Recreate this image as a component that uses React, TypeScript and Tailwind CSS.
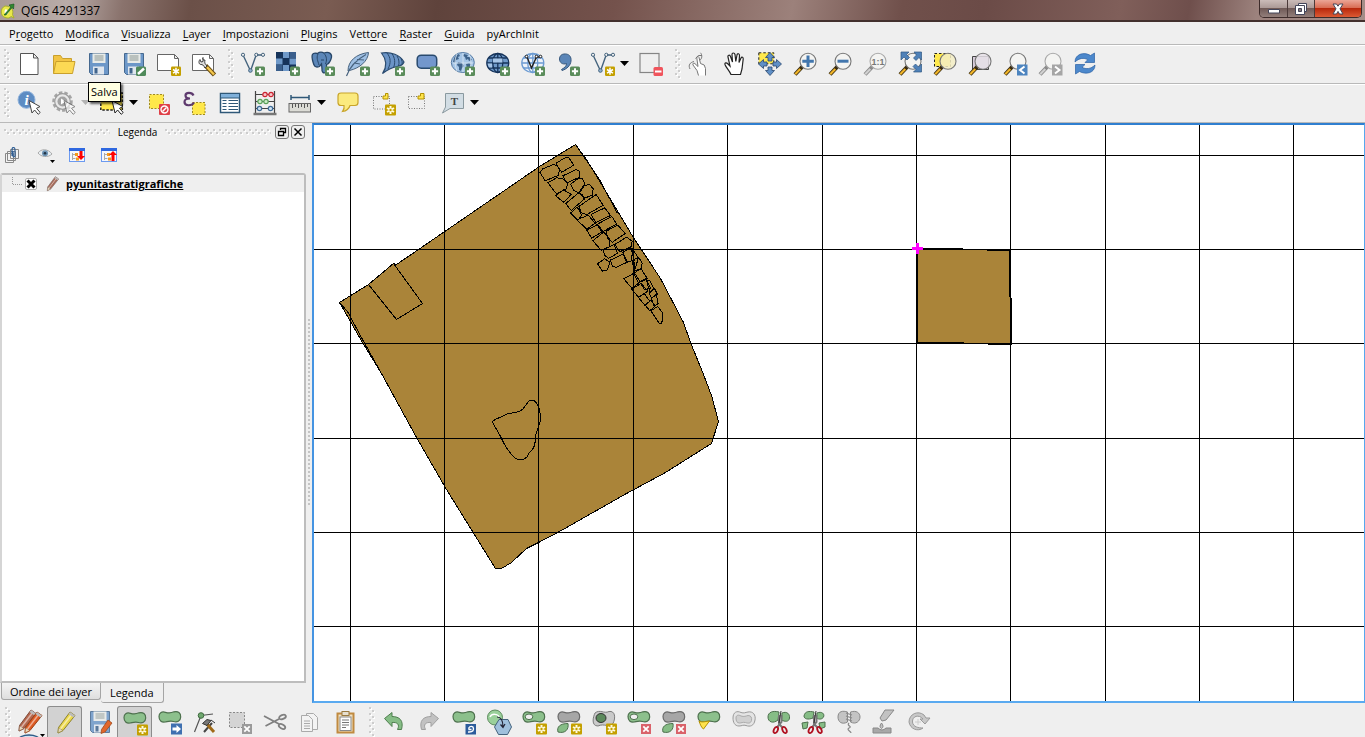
import React from "react";

type Draw = React.ReactNode;

/* ---------- small marks shared by many tool icons ---------- */

const Plus = () => (
  <g>
    <rect x="14" y="14.5" width="10" height="9.5" rx="1.5" fill="#5a8c5a" />
    <path d="M19 16.2v6.2M15.9 19.3h6.2" stroke="#fff" strokeWidth="2" />
  </g>
);
const Star = () => (
  <g transform="translate(14 14.5)">
    <rect width="10" height="9.5" rx="1.2" fill="#c4a000" />
    <path d="M5 1.3v7M2 3l6 3.6M8 3L2 6.6" stroke="#fff" strokeWidth="1.5" />
  </g>
);
const Gear = () => (
  <g>
    <rect x="14" y="13.5" width="11" height="11" rx="1" fill="#c4a000" />
    <path d="M19.5 15v8M16 17l7 4M23 17l-7 4" stroke="#fffbe0" strokeWidth="2" />
    <circle cx="19.5" cy="19" r="1.2" fill="#c4a000" />
  </g>
);
const Cross = ({ grey = false }: { grey?: boolean }) => (
  <g>
    <rect x="14" y="14" width="10" height="10" fill={grey ? "#9a9a9a" : "#d9626a"} />
    <path d="M16.3 16.3l5.4 5.4M21.7 16.3l-5.4 5.4" stroke="#fff" strokeWidth="1.8" />
  </g>
);
const Pointer = ({ dark = false }: { dark?: boolean }) => (
  <path
    d="M12 9.5l3 12.5 2.6-3 3.6 4.3 2-1.8-3.7-4.2 3.5-1.7z"
    fill="#fff"
    stroke={dark ? "#222" : "#444"}
    strokeWidth="1"
  />
);
const Lens = ({ children, grey = false, fill = "#f4f4f2" }: { children?: Draw; grey?: boolean; fill?: string }) => (
  <g>
    <path d="M9.5 14.5L2 22.5" stroke={grey ? "#8a8a8a" : "#3a2c10"} strokeWidth="4" />
    <path d="M7.3 17L2.2 22.3" stroke={grey ? "#d0d0d0" : "#f0b428"} strokeWidth="2.2" />
    <circle cx="15" cy="9.2" r="8" fill={fill} fillOpacity="0.85" stroke={grey ? "#a8a8a8" : "#777"} strokeWidth="1.1" />
    {children}
  </g>
);
const Floppy = () => (
  <g>
    <path d="M2.5 1.5h19v21h-17l-2-2z" fill="#6c97c8" stroke="#45688f" />
    <rect x="5.5" y="1.5" width="13" height="9.5" fill="#e8ebe8" />
    <path d="M7.5 4h9M7.5 6h9M7.5 8h9" stroke="#8b9793" />
    <rect x="6" y="14.5" width="11" height="8" fill="#dfe6ee" />
    <rect x="7.5" y="16" width="3" height="5.5" fill="#41658d" />
  </g>
);
const Nodes = () => (
  <g fill="none" stroke="#44637d">
    <path d="M2.6 4.2L8.6 17M10.2 17L14.8 4M16 3h4.5" strokeWidth="1.4" />
    <circle cx="2" cy="2.8" r="1.6" />
    <circle cx="15.3" cy="2.8" r="1.6" />
    <circle cx="22" cy="2.8" r="1.6" />
    <circle cx="9.4" cy="18.5" r="1.8" fill="#8fb0cf" />
  </g>
);
const Blob = ({ fill = "#8cc08c", stroke = "#4d704d", children }: { fill?: string; stroke?: string; children?: Draw }) => (
  <g>
    <path
      d="M1 6.500C1 3 3.500 1.200 7.500 2.300C11 3.300 13 3.100 16 1.800C20 .800 23 3 22.700 7C22.500 11.500 19 12.500 15.500 11.500C12 10.600 10 11.500 7 12C3.500 12.500 1 10.500 1 6.500z"
      fill={fill}
      stroke={stroke}
      strokeWidth="1.2"
    />
    {children}
  </g>
);
const GREY = "#a6a6a6";
const Ring = () => <ellipse cx="7" cy="6.800" rx="3.800" ry="2.800" fill="#efefef" stroke="#4d704d" />;
const Leaf = () => <path d="M1 22C-.500 17 3 13.500 11 13.500C12 19 8.500 24 1 22z" fill="#86bd86" stroke="#4d704d" />;
const Scissors = () => (
  <g fill="none">
    <path d="M12 5v9l4 4M14.500 5v7l-5 6" stroke="#777" strokeWidth="2" />
    <path d="M14 1L12 13" stroke="#333" />
    <ellipse cx="8.800" cy="20" rx="1.900" ry="3.300" transform="rotate(25 8.800 20)" stroke="#b01020" strokeWidth="1.800" />
    <ellipse cx="17.500" cy="20" rx="1.900" ry="3.300" transform="rotate(-25 17.500 20)" stroke="#b01020" strokeWidth="1.800" />
  </g>
);
const Pencil = ({ fill, edge }: { fill: string; edge: string }) => (
  <g>
    <path d="M17 1l5 3.500L10 19.500 5 22l.5-5.500z" fill={fill} stroke={edge} />
    <path d="M5.500 16.500L10 19.500 5 22z" fill="#e6d8bd" stroke={edge} strokeWidth=".6" />
    <path d="M19 3L7.500 18" stroke="#fff" strokeOpacity=".5" strokeWidth="1.500" />
    <path d="M17 1l5 3.500-1.500 2L15.500 3z" fill="#bbb" />
  </g>
);
const Globe = ({ fill, stroke }: { fill: string; stroke: string }) => (
  <g fill="none" stroke={stroke} strokeWidth="1.300">
    <ellipse cx="11.800" cy="11" rx="11" ry="9.500" fill={fill} />
    <ellipse cx="11.800" cy="11" rx="5" ry="9.500" />
    <path d="M11.800 1.500v19M1 11h22M3 6h17.600M3 16h17.600" />
  </g>
);

/* ---------- icon table ---------- */

const icons: Record<string, Draw> = {
  new: <path d="M3.500 1.500h13l4.500 4.500v16.500h-17.500zM16.500 1.500V6H21" fill="#fff" stroke="#555" />,
  open: (
    <g stroke="#c9a02c">
      <path d="M1.500 21.500V3.500h7l2 3h9v3" fill="#f2c444" />
      <path d="M1.500 21.500l2.500-12h19l-2.500 12z" fill="#fcd954" />
    </g>
  ),
  save: <Floppy />,
  saveAs: (
    <g>
      <Floppy />
      <rect x="14" y="14.500" width="10" height="9.500" rx="1.500" fill="#4f8a5a" />
      <path d="M16 22l6-5.500" stroke="#fff" strokeWidth="2.500" />
    </g>
  ),
  composer: (
    <g>
      <path d="M.5 2.500h17l4 4v12h-21zM17.500 2.500v4h4" fill="#fff" stroke="#666" />
      <Star />
    </g>
  ),
  manager: (
    <g>
      <path d="M.5 2.500h17l4 4v12h-21zM17.500 2.500v4h4" fill="#fff" stroke="#666" />
      <path d="M13.500 13.500l9 9.500" stroke="#6b4d10" strokeWidth="4.500" />
      <path d="M15 15l7 7.500" stroke="#f3c64c" strokeWidth="2.500" />
      <path d="M11 5.500c-1 1.800.5 3 2 2.500-.5 2.800-.5 3.500 2 6l-2 2c-1.500-3-2.500-3.500-4-3.500C6.500 12.500 6.500 9 8 7.500l1 2.500 2-.5z" fill="#ddd" stroke="#333" strokeWidth=".9" />
    </g>
  ),
  vector: (<g><Nodes /><Plus /></g>),
  raster: (
    <g>
      <rect y="0" width="20" height="19" fill="#16335a" />
      <path d="M7 0h6v6H7zM0 6.500h6.500v6H0zM13.500 6.500H20v6h-6.500zM7 13h6v6H7z" fill="#6f99c9" />
      <path d="M13.500 0H20v6h-6.500zM0 13h6.500v6H0z" fill="#3a5f8c" />
      <Plus />
    </g>
  ),
  postgis: (
    <g>
      <path d="M2 10C0 3 1 0 6.500 1.500 9-.5 12 .5 13 1c5-2 9 1 7 6-1 3-3 5-4.500 5.500V20c-3 2-5 0-4.500-3l-.5-5-2 2.500C4 16 3 14 2 10z" fill="#5b86b8" stroke="#274668" strokeWidth="1.300" />
      <path d="M7 2c-2 4 0 7 1 11M13 1.500c3 3 3 7 1.500 10.500M10 8h3" fill="none" stroke="#274668" />
      <Plus />
    </g>
  ),
  feather: (
    <g>
      <path d="M2 19C2 9 10 2 22.500.5 22 9 14 16 3.500 18.500z" fill="#9fc0e4" stroke="#46617d" />
      <path d="M.5 24C4 14 10 8 20 2.500M8 11l6 1M11 7.500l7 .5" fill="none" stroke="#46617d" strokeWidth="1.200" />
      <Plus />
    </g>
  ),
  fan: (
    <g>
      <path d="M.5 1C10-.5 19 3 23 10c-1 3-4 4-7 4.500C11 15.500 6 18 1.500 21.500 6 15 6 8 .5 1z" fill="#6b94c6" stroke="#294a6e" strokeWidth="1.200" />
      <path d="M6 1c4 5 4 10 1 16M11 1.800c3 4 3.500 9 1.500 14M16 4c2 3 2.500 7 1.500 10M20 6.500c1 2 1.500 4 1 6" fill="none" stroke="#294a6e" />
      <Plus />
    </g>
  ),
  rect: (
    <g>
      <rect x="1.200" y="3.200" width="19.500" height="13" rx="4" fill="#7397cc" stroke="#294a6e" strokeWidth="1.500" />
      <Plus />
    </g>
  ),
  wms: (
    <g>
      <ellipse cx="11.800" cy="10.500" rx="11.500" ry="10" fill="#a5c5e6" stroke="#557ba4" />
      <path d="M3 6l2-3 3-1 1 2-2 1 1 2-3 1-1 3-2-1zM13 2l4 1-1 2 3 0 2 3-3 1-1-2-2 1-1-3-2-1zM7 10l4 1 2 3-2 2-1 3-2-1 0-3-2-2zM15 12l3-1 2 1-1 3-3 1z" fill="#3f648c" />
      <path d="M2 11h20M12 1v19M6 2q-4 8 0 17M18 2q4 8 0 17" fill="none" stroke="#dce8f4" strokeWidth=".8" />
      <Plus />
    </g>
  ),
  wcs: (<g><Globe fill="#6f99c9" stroke="#16335a" /><path d="M7 6.500h9.500v4H7zM1.500 11.500H6v4H3z" fill="#a7c6e8" /><Plus /></g>),
  wfs: (
    <g>
      <Globe fill="#edf3fa" stroke="#6c9bd2" />
      <path d="M6 5l4.500 11L15.500 5h4" fill="none" stroke="#222" strokeWidth="1.400" />
      <g fill="#fff" stroke="#222"><circle cx="5.500" cy="4.500" r="1.300" /><circle cx="15.500" cy="4.500" r="1.300" /><circle cx="19.500" cy="4.500" r="1.300" /></g>
      <Plus />
    </g>
  ),
  comma: (
    <g>
      <path d="M8 2c5-.5 7.500 2.500 7 7-.5 4.500-4 8-9 9.500l-.5-1C9 15.500 10.500 14 10.500 11.500 6.500 13 3.500 10.500 3.500 7c0-3 2-4.800 4.500-5z" fill="#5b86b8" stroke="#38597e" />
      <Plus />
    </g>
  ),
  newVector: (<g><Nodes /><Star /></g>),
  remove: (
    <g>
      <rect x="1" y="1.500" width="19" height="19" fill="#efefef" stroke="#858585" strokeWidth="1.200" />
      <rect x="14.500" y="15" width="9.500" height="9" rx="1.500" fill="#f0545c" />
      <path d="M16 19.500h6.500" stroke="#fff" strokeWidth="2" />
    </g>
  ),
  touch: (
    <g fill="#fff" stroke="#777" strokeWidth="1">
      <path d="M10.500 23.500l-1.500-5-4-5.500c-.8-1.800 1-2.300 2-1.300l3 2.800L8.800 6c0-2 1.700-2 2.200-.5l1.500 6 3.700 1.500 1.300 3.500v7" />
      <path d="M12 8C14 7 14.500 3 12.500.8M7.500 6.500q2.500-4.500 6.500-3M2 17C0 13 2 10.500 6 9.500" fill="none" />
    </g>
  ),
  hand: <path d="M8 22.500C6 18 3 15.500 2 12.500c-.5-2 1.500-2 3-.5l2 2L5 5c-.5-2 1.800-2.500 2.500-.5L9.500 10 9 2.500C9 .5 11.500.5 12 2.500l.8 7L14 3c.3-2 2.500-1.500 2.500.5L16 10.500l2-4.500c.8-1.500 2.500-.8 2.200 1L19 17l-1.500 5.500z" fill="#fff" stroke="#222" strokeWidth="1.200" />,
  pan: (
    <g>
      <path d="M.8.800h15v11h-15z" fill="#ffe94c" stroke="#222" strokeDasharray="2.500 2" />
      <path d="M12 .5l4.500 5h-2.500v3.500h-4V5.500H7.500zM12 23.500l-4.500-5H10V15h4v3.500h2.500zM.5 12l5-4.500V10H9v4H5.500v2.500zM23.500 12l-5 4.500V14H15v-4h3.500V7.500z" fill="#5f8fc6" stroke="#29486e" strokeWidth=".8" />
    </g>
  ),
  zoomIn: <Lens><path d="M15 3.500v11.500M9.300 9.200h11.500" stroke="#4276ad" strokeWidth="3" /></Lens>,
  zoomOut: <Lens><path d="M9.500 9.200h11" stroke="#4276ad" strokeWidth="3" /></Lens>,
  zoomOne: (
    <Lens grey>
      <text x="15" y="12.500" fontSize="9" fontWeight="700" textAnchor="middle" fontFamily="Liberation Sans, sans-serif" fill="#777">1:1</text>
    </Lens>
  ),
  zoomFull: (
    <g>
      <Lens />
      <path d="M3 0h8L8.500 2.500l3 3-2.500 2.500-3-3L3 8zM23.500 0v8L21 5.500l-3 3L15.500 6l3-3L16 0zM23.500 20h-8l2.500-2.500-3-3 2.500-2.500 3 3L23.500 12z" fill="#4f81b8" stroke="#2f5783" strokeWidth=".7" />
    </g>
  ),
  zoomSel: (<g><path d="M1.500 1.500h16v13h-16z" fill="#ffe94c" stroke="#222" strokeDasharray="2.500 2" /><Lens fill="#f3edc4" /></g>),
  zoomLayer: (<g><path d="M4.500 4.500h16v13h-16z" fill="#d8cddb" stroke="#444" /><Lens fill="#e6e0e8" /></g>),
  zoomLast: (<g><Lens /><rect x="14" y="12.500" width="10.500" height="11" fill="#4c84bf" /><path d="M21.500 14.500l-4.500 3.500 4.500 3.500" fill="none" stroke="#fff" strokeWidth="2" /></g>),
  zoomNext: (<g><Lens grey /><rect x="14" y="12.500" width="10.500" height="11" fill="#a5a5a5" /><path d="M17 14.500l4.500 3.500-4.500 3.500" fill="none" stroke="#fff" strokeWidth="2" /></g>),
  refresh: (
    <g fill="#4c88cc" stroke="#2c62a4" strokeWidth=".7">
      <path d="M2 10C2 2 11-.5 17.500 3.500L21.500 1v9.500H12l2.800-2.800C11 5.500 6 6 2 10z" />
      <path d="M22 13c0 8-9 10-15.500 6.500L2.500 22v-9.500h9.500l-3 2.800c4 2.200 9 1.700 13-2.300z" />
    </g>
  ),
  identify: (
    <g>
      <circle cx="9.500" cy="8.800" r="8.500" fill="#5d8cc3" stroke="#8fb2db" />
      <text x="9.500" y="14" fontSize="15" fontStyle="italic" fontWeight="700" textAnchor="middle" fontFamily="Liberation Serif, serif" fill="#fff">i</text>
      <Pointer />
    </g>
  ),
  action: (
    <g>
      <circle cx="10.500" cy="10.500" r="9" fill="#efefef" stroke="#a5a5a5" strokeWidth="2.500" strokeDasharray="3.500 2" />
      <circle cx="10.500" cy="10.500" r="7.800" fill="#e8e8e8" stroke="#9c9c9c" strokeWidth="1.200" />
      <circle cx="10.500" cy="10.500" r="5" fill="#a2a2a2" />
      <path d="M9 7.500v6l5-3z" fill="#fff" />
      <g opacity=".6"><Pointer /></g>
    </g>
  ),
  select: (
    <g>
      <path d="M.8 2h21.500v17H.8z" fill="#ffe94c" stroke="#222" strokeWidth="1.500" strokeDasharray="2.500 1.500" />
      <Pointer dark />
    </g>
  ),
  deselect: (
    <g>
      <path d="M1.500 3.500h14v14h-14z" fill="#ffe84a" stroke="#a08a20" strokeDasharray="2 1.500" />
      <rect x="11" y="13" width="11" height="11" rx="1" fill="#df4048" />
      <circle cx="16.500" cy="18.500" r="3.500" fill="none" stroke="#fff" strokeWidth="1.400" />
      <path d="M14.500 20.500l4-4" stroke="#fff" strokeWidth="1.400" />
    </g>
  ),
  expression: (
    <g>
      <path d="M9.500 11.500h12.500v12H9.500z" fill="#ffe84a" stroke="#a08a20" strokeDasharray="2 1.500" />
      <path d="M10.500 4.500C9 1 2.500 1 2.500 4.500c0 2 2 3 4.500 3C3.500 7.500 1.500 9 1.500 11c0 4 7 4.500 9.500.5" fill="none" stroke="#5e3a6e" strokeWidth="2.200" />
    </g>
  ),
  table: (
    <g>
      <rect x="2.500" y="2.500" width="19" height="19" fill="#fff" stroke="#2f5878" strokeWidth="1.500" />
      <rect x="3" y="3" width="18" height="4" fill="#7fb0da" />
      <path d="M4.500 9.500h4M4.500 12.500h4M4.500 15.500h4M4.500 18.500h4M10.500 9.500h9.500M10.500 12.500h9.500M10.500 15.500h9.500M10.500 18.500h9.500M3 7h18" stroke="#2f5878" />
    </g>
  ),
  abacus: (
    <g fill="none" stroke="#444" strokeWidth="1.200">
      <path d="M2.500 0v22M21.500 0v22M2.500 3.500h19M2.500 10.500h19M2.500 17.500h19" />
      <path d="M.5 23h23" strokeWidth="2.500" stroke="#777" />
      <g fill="#f6c6c8" stroke="#cc2230"><circle cx="12" cy="3.500" r="2.200" /><circle cx="18" cy="3.500" r="2.200" /></g>
      <g fill="#cdeccb" stroke="#58a058"><circle cx="7" cy="10.500" r="2.200" /><circle cx="13" cy="10.500" r="2.200" /></g>
      <g fill="#cfe2f2" stroke="#3f6c98"><circle cx="6.500" cy="17.500" r="2.200" /><circle cx="17.500" cy="17.500" r="2.200" /></g>
    </g>
  ),
  measure: (
    <g>
      <path d="M3 6.500h18M3 4v5M21 4v5" stroke="#2f5878" strokeWidth="1.500" />
      <rect x="1" y="12.500" width="21.500" height="8.500" fill="#dcdcd6" stroke="#666" />
      <path d="M4.500 13v4M7.500 13v3M10.500 13v4M13.500 13v3M16.500 13v4M19.500 13v3" stroke="#555" />
    </g>
  ),
  tips: <path d="M5 2h14q3 0 3 3v6.500q0 3-3 3h-5c-1 3.500-4 5.500-7.500 6 1.500-2 2-4 1.500-6H5q-3 0-3-3V5q0-3 3-3z" fill="#fbea7e" stroke="#c8a42a" strokeWidth="1.200" />,
  newMark: (
    <g>
      <path d="M2.500 5.500h16v12.500h-16z" fill="none" stroke="#777" strokeDasharray="1 1.500" />
      <path d="M12 8V5h2.500V2.500H17V8z" fill="#ffe54c" stroke="#b49200" />
      <Gear />
    </g>
  ),
  marks: (
    <g>
      <path d="M2.500 5.500h16v12h-16z" fill="none" stroke="#777" strokeDasharray="1 1.500" />
      <path d="M12 8V5h2.500V2.500H18V8z" fill="#ffe54c" stroke="#b49200" />
    </g>
  ),
  note: (
    <g>
      <path d="M4.500 2.500h18v15H9L1.500 22l3-6z" fill="#d2dde4" stroke="#8a999f" />
      <text x="13.500" y="14" fontSize="11" fontWeight="700" textAnchor="middle" fontFamily="Liberation Serif, serif" fill="#444">T</text>
    </g>
  ),
  edits: (
    <g>
      <ellipse cx="11" cy="30.500" rx="11" ry="5.500" fill="#cfe2f2" stroke="#2c5a86" strokeWidth="1.300" />
      <g transform="translate(-4 -1)"><Pencil fill="#b5674e" edge="#7d4a38" /></g>
      <g transform="translate(2 1)"><Pencil fill="#dd5a22" edge="#9a4014" /></g>
      <path d="M22 24h5l-2.500 3z" />
    </g>
  ),
  pencil: <Pencil fill="#ecd94c" edge="#8c8030" />,
  saveEdits: (
    <g>
      <g opacity=".85"><Floppy /></g>
      <path d="M20 10l4 3-7 9-4 1.500.5-4z" fill="#e2672c" stroke="#a04a1c" strokeWidth=".8" />
    </g>
  ),
  addFeature: (<g><Blob /><Gear /></g>),
  moveFeature: (
    <g>
      <Blob />
      <rect x="13" y="13.500" width="11" height="11" fill="#3f70b0" />
      <path d="M14.500 17.500h4V15l4.500 4-4.500 4v-2.500h-4z" fill="#fff" />
    </g>
  ),
  nodeTool: (
    <g>
      <path d="M1.500 22L8 5.500 20 4" fill="none" stroke="#555" strokeWidth="1.200" />
      <circle cx="8" cy="5.500" r="2.800" fill="#6fa86f" stroke="#3e6a3e" />
      <path d="M11 22l8-9" stroke="#444" strokeWidth="2" />
      <path d="M13 13l8 9" stroke="#a06a18" strokeWidth="3" />
      <path d="M9.500 13.500L14 9.500l4 1-4 5zM18 10l4 3" fill="#777" stroke="#333" />
    </g>
  ),
  deleteSel: (<g><rect x="1.500" y="2.500" width="15" height="15" fill="#d4d4d4" stroke="#888" strokeDasharray="2 1.500" /><Cross grey /></g>),
  cut: (
    <g fill="none" stroke="#808080" strokeWidth="1.800">
      <path d="M1 6l15 8M2.500 16L16 9" />
      <ellipse cx="19.500" cy="7" rx="3.500" ry="2" transform="rotate(-20 19.500 7)" />
      <ellipse cx="19" cy="16.500" rx="3.500" ry="2" transform="rotate(30 19 16.500)" />
    </g>
  ),
  copy: (
    <g fill="#f3f3f3" stroke="#aaa">
      <path d="M8.500 3.500h7l4 4v12h-11z" />
      <path d="M3.500 5.500h7l4 4v12h-11zM6 11h6M6 13.500h6M6 16h6M6 18.500h6" />
    </g>
  ),
  paste: (
    <g>
      <rect x="4.500" y="3.500" width="16" height="19" fill="#f0e2c4" stroke="#c08a40" strokeWidth="2" />
      <rect x="7" y="7" width="11" height="13.500" fill="#fff" stroke="#888" />
      <path d="M9 10h7M9 12.500h7M9 15h7M9 17.500h4" stroke="#777" />
      <rect x="9" y="1.500" width="7" height="4" fill="#e7e0d0" stroke="#9a7a40" />
    </g>
  ),
  undo: <path d="M2.500 9.500L10 3.500v4c7.500 0 12 4 9.500 13h-4c2.500-5 0-7.500-5.500-7v4z" transform="translate(0 -1)" fill="#86bd86" stroke="#4f7f4f" />,
  redo: <path d="M21.500 9.500L14 3.500v4c-7.500 0-12 4-9.500 13h4c-2.500-5 0-7.500 5.500-7v4z" transform="translate(0 -1)" fill="#c2c2c2" stroke="#a0a0a0" />,
  rotate: (
    <g>
      <Blob />
      <rect x="13.500" y="14" width="10.500" height="10.500" fill="#2c5c9c" />
      <path d="M16 22c5 .5 6.500-2 5-5-2-1.500-5 0-4 2.500h2.500" fill="none" stroke="#fff" strokeWidth="1.400" />
    </g>
  ),
  simplify: (
    <g>
      <circle cx="8" cy="7.500" r="7.500" fill="#9ad09a" stroke="#5c8a5c" />
      <path d="M3 7c2-4 8-3 9 0" fill="none" stroke="#fff" strokeWidth="1.500" />
      <path d="M12 9.500h9l3.500 7.500-4 7.500h-9L7.500 17z" fill="#9fc0dc" stroke="#44637d" />
      <path d="M10 7q6 0 6 10M13.500 14.500l2.500 3 2-3.500" fill="none" stroke="#223" strokeWidth="1.200" />
    </g>
  ),
  addRing: (<g><Blob><Ring /></Blob><Gear /></g>),
  addPart: (<g><Blob fill={GREY} stroke="#6a6a6a" /><Leaf /><Gear /></g>),
  fillRing: (
    <g>
      <path d="M3 3C8-1 12 4 17 1.500c6-1 7 6 4 12C17 18 12 13 6 16c-7 0-5-9-3-13z" fill="#cacaca" stroke="#7c7c7c" />
      <ellipse cx="9" cy="8" rx="5" ry="4.500" fill="#5c8a5c" stroke="#333" />
      <Gear />
    </g>
  ),
  deleteRing: (<g><Blob><Ring /></Blob><Cross /></g>),
  deletePart: (<g><Blob fill={GREY} stroke="#6a6a6a" /><Leaf /><Cross /></g>),
  reshape: (<g><Blob /><path d="M2 11c3 2 8 0 10.500 0L6.500 19C4.500 18 3 14 2 11z" fill="#ffe34c" stroke="#b49200" /></g>),
  offset: (
    <g>
      <path d="M1 8C1 2 5 .5 9 2.500c3 1 4 0 7-.5 5-1 8 3 7 8-1 6-5 7-9 5.500-3-1-4 .5-7 .5C2.500 16 1 12 1 8z" fill="#e4e4e4" stroke="#9a9a9a" />
      <path d="M4 8c0-3 2.500-3.500 5-2 3 1 5 0 7-.5 3 0 4 2 3.500 5-1 3-3 3-6 2-3-.5-4 .5-6 .5-2.500 0-3.500-2-3.500-5z" fill="#d0d0d0" stroke="#aaa" />
    </g>
  ),
  splitFeature: (
    <g>
      <path d="M1 7C1 2 6 .5 12 2l-1 8C6 14 1 12 1 7zM15 3c5-2 8 1 7.500 5C22 12 18 12 14.500 10z" fill="#86bd86" stroke="#4d704d" />
      <Scissors />
    </g>
  ),
  splitPart: (
    <g>
      <path d="M2 6C3 1 7 1 12 2l-1 6C6 10 2 9 2 6zM15 3c5-2 8 1 6.500 4-1 2-4 3-7 1zM0 13l6-1-1 6-4 1zM17 13l6-1v5l-5 2z" fill="#86bd86" stroke="#4d704d" />
      <Scissors />
    </g>
  ),
  merge: (
    <g>
      <path d="M1 7C1 1 6 .5 10.500 2v10C5 15 1 12 1 7zM13.500 2c6-2 9.500 1 9.500 5s-4 8-9.500 5z" fill="#c4c4c4" stroke="#8a8a8a" />
      <path d="M9 3l6 2M9 6l6 2M9 9l6 2M12 13c-3 3 4 3 0 5-3 2 2 3 2 5" fill="none" stroke="#888" strokeWidth="1.200" />
    </g>
  ),
  mergeAttr: (
    <g fill="#c2c2c2" stroke="#888">
      <path d="M13 0h9l-8 10-4 1-2-3z" />
      <path d="M9.500 13q3 4 0 5.500-3-1.500 0-5.500z" />
      <path d="M1 18h5q4 4 8 0h5v5H1z" fill="#a8a8a8" />
    </g>
  ),
  rotateSym: (
    <g>
      <path d="M16 18C11 22 3 19 2 12 2 4 11 0 17 5l2 3h4l-5 6-5-5h3C12 4 5 6 5.500 12c.5 5 6 6 10.500 6z" fill="#c8c8c8" stroke="#9a9a9a" />
      <path d="M11 9v6M8 12h6" stroke="#ccc" />
    </g>
  ),
};

/* ---------- toolbar parts ---------- */

const Grip = () => (
  <svg className="h-[30px] w-[7px] shrink-0" aria-hidden="true">
    <defs>
      <pattern id="grip-v" width="7" height="6" patternUnits="userSpaceOnUse">
        <path d="M1 1h2v2H1zM4 4h2v2H4z" fill="#fff" />
        <path d="M0 0h2v2H0zM3 3h2v2H3z" fill="#cdcdcd" />
      </pattern>
    </defs>
    <rect width="7" height="30" fill="url(#grip-v)" />
  </svg>
);
const DockGrip = () => (
  <svg className="h-[6px] min-w-0 flex-1" aria-hidden="true">
    <defs>
      <pattern id="grip-h" width="6" height="6" patternUnits="userSpaceOnUse">
        <path d="M1 1h2v2H1zM4 4h2v2H4z" fill="#fff" />
        <path d="M0 0h2v2H0zM3 3h2v2H3z" fill="#cdcdcd" />
      </pattern>
    </defs>
    <rect width="100%" height="6" fill="url(#grip-h)" />
  </svg>
);

type Item = { id: string; label: string; arrow?: "black" | "grey"; pressed?: boolean; tip?: string };

const ToolButton = ({ item }: { item: Item }) => (
  <>
    <button
      type="button"
      aria-label={item.label}
      aria-pressed={item.pressed}
      className={
        item.pressed
          ? "relative flex h-8 w-[35px] shrink-0 items-center justify-center rounded-t-[3px] border border-b-0 border-[#8c8c8c] bg-[#d2d2d2]"
          : "relative flex h-8 w-[35px] shrink-0 items-center justify-center"
      }
    >
      <svg viewBox="0 0 24 24" className="h-6 w-6 overflow-visible" aria-hidden="true">{icons[item.id]}</svg>
      {item.tip && (
        <span role="tooltip" className="absolute top-[34px] left-[7px] z-10 border border-black bg-[#ffffe1] px-0.5 text-[11px] leading-[18px] text-black shadow-[2px_2px_2px_rgba(0,0,0,0.6)]">
          {item.tip}
        </span>
      )}
    </button>
    {item.arrow && (
      <button type="button" aria-label={`${item.label}: menu`} className="flex h-8 w-[13px] shrink-0 items-center">
        <svg viewBox="0 0 9 5" className="h-[5px] w-[9px]" aria-hidden="true">
          <path d="M0 0h9L4.500 5z" fill={item.arrow === "black" ? "#000" : "#b4b4b4"} />
        </svg>
      </button>
    )}
  </>
);

const Group = ({ label, items }: { label: string; items: Item[] }) => (
  <div role="toolbar" aria-label={label} className="flex items-center">
    <Grip />
    {items.map((item) => (
      <ToolButton key={item.id} item={item} />
    ))}
  </div>
);

const fileTools: Item[] = [
  { id: "new", label: "Nuovo" },
  { id: "open", label: "Apri" },
  { id: "save", label: "Salva", tip: "Salva" },
  { id: "saveAs", label: "Salva con nome" },
  { id: "composer", label: "Nuova composizione" },
  { id: "manager", label: "Gestore composizioni" },
];
const layerTools: Item[] = [
  { id: "vector", label: "Aggiungi vettore" },
  { id: "raster", label: "Aggiungi raster" },
  { id: "postgis", label: "Aggiungi PostGIS" },
  { id: "feather", label: "Aggiungi SpatiaLite" },
  { id: "fan", label: "Aggiungi MSSQL" },
  { id: "rect", label: "Aggiungi Oracle" },
  { id: "wms", label: "Aggiungi WMS" },
  { id: "wcs", label: "Aggiungi WCS" },
  { id: "wfs", label: "Aggiungi WFS" },
  { id: "comma", label: "Aggiungi testo delimitato" },
  { id: "newVector", label: "Nuovo vettore", arrow: "black" },
  { id: "remove", label: "Rimuovi layer" },
];
const navTools: Item[] = [
  { id: "touch", label: "Tocco" },
  { id: "hand", label: "Sposta mappa" },
  { id: "pan", label: "Sposta alla selezione" },
  { id: "zoomIn", label: "Ingrandisci" },
  { id: "zoomOut", label: "Rimpicciolisci" },
  { id: "zoomOne", label: "Risoluzione nativa" },
  { id: "zoomFull", label: "Zoom completo" },
  { id: "zoomSel", label: "Zoom selezione" },
  { id: "zoomLayer", label: "Zoom layer" },
  { id: "zoomLast", label: "Zoom precedente" },
  { id: "zoomNext", label: "Zoom successivo" },
  { id: "refresh", label: "Aggiorna" },
];
const attributeTools: Item[] = [
  { id: "identify", label: "Informazioni" },
  { id: "action", label: "Azione", arrow: "grey" },
  { id: "select", label: "Seleziona", arrow: "black" },
  { id: "deselect", label: "Deseleziona" },
  { id: "expression", label: "Seleziona con espressione" },
  { id: "table", label: "Tabella attributi" },
  { id: "abacus", label: "Calcolatore campi" },
  { id: "measure", label: "Misura", arrow: "black" },
  { id: "tips", label: "Suggerimenti mappa" },
  { id: "newMark", label: "Nuovo segnalibro" },
  { id: "marks", label: "Segnalibri" },
  { id: "note", label: "Annotazione", arrow: "black" },
];
const editTools: Item[] = [
  { id: "edits", label: "Modifiche attuali" },
  { id: "pencil", label: "Attiva modifica", pressed: true },
  { id: "saveEdits", label: "Salva modifiche" },
  { id: "addFeature", label: "Aggiungi elemento", pressed: true },
  { id: "moveFeature", label: "Sposta elemento" },
  { id: "nodeTool", label: "Strumento vertici" },
  { id: "deleteSel", label: "Elimina selezione" },
  { id: "cut", label: "Taglia" },
  { id: "copy", label: "Copia" },
  { id: "paste", label: "Incolla" },
];
const advancedTools: Item[] = [
  { id: "undo", label: "Annulla" },
  { id: "redo", label: "Ripeti" },
  { id: "rotate", label: "Ruota elemento" },
  { id: "simplify", label: "Semplifica" },
  { id: "addRing", label: "Aggiungi buco" },
  { id: "addPart", label: "Aggiungi parte" },
  { id: "fillRing", label: "Riempi buco" },
  { id: "deleteRing", label: "Elimina buco" },
  { id: "deletePart", label: "Elimina parte" },
  { id: "reshape", label: "Modifica forma" },
  { id: "offset", label: "Offset curva" },
  { id: "splitFeature", label: "Spezza elemento" },
  { id: "splitPart", label: "Spezza parte" },
  { id: "merge", label: "Fondi elementi" },
  { id: "mergeAttr", label: "Fondi attributi" },
  { id: "rotateSym", label: "Ruota simboli" },
];

/* ---------- menu bar: text before, mnemonic letter, text after ---------- */

const menus: [string, string, string][] = [
  ["P", "r", "ogetto"],
  ["", "M", "odifica"],
  ["", "V", "isualizza"],
  ["", "L", "ayer"],
  ["", "I", "mpostazioni"],
  ["", "P", "lugins"],
  ["Vett", "o", "re"],
  ["", "R", "aster"],
  ["", "G", "uida"],
  ["pyArchInit", "", ""],
];

/* ---------- map ---------- */

const gridX = Array.from({ length: 40 }, (_, i) => Math.round(35.7 + i * 94.37));
const gridY = Array.from({ length: 20 }, (_, i) => Math.round(29.8 + i * 94.3));

/* wall stones, drawn at three units per pixel */
const stones = [
  "46,113 55,103 87,90 97,93 104,104 103,122 62,139",
  "95,86 123,69 133,70 148,92 112,113 104,103",
  "115,124 155,105 165,111 166,128 127,145",
  "70,145 96,130 115,132 129,148 126,163 96,178",
  "138,149 160,133 174,132 181,147 163,175 148,168",
  "165,174 181,152 196,151 206,163 203,182 180,191",
  "93,184 117,166 140,180 118,203",
  "124,207 160,177 174,180 179,194 140,228",
  "163,216 215,180 236,212 186,241 170,234",
  "138,236 158,218 172,242 160,257",
  "200,240 241,220 258,243 214,264",
  "157,256 191,242 212,266 187,284",
  "219,269 262,246 277,269 235,291",
  "187,287 219,270 231,293 201,311",
  "245,290 280,272 302,297 264,323 250,313",
  "205,319 238,292 257,317 254,337 230,347",
  "271,330 306,308 323,320 320,336 286,352",
  "236,346 268,330 279,356 252,372 240,362",
  "219,388 240,373 256,382 249,406 234,410",
  "257,377 296,359 306,384 277,398 265,397",
  "295,353 319,340 329,377 309,383",
  "325,345 342,370 330,408 321,374",
  "328,375 343,369 353,386 351,404 331,408",
  "298,433 327,417 343,446 322,461",
  "330,415 349,402 368,431 346,441",
  "345,443 366,435 378,461 361,466",
  "322,464 350,447 370,470 342,488",
  "366,438 376,439 388,463 376,473",
  "342,489 359,477 376,500 361,512",
  "374,476 390,462 399,480 381,491",
  "362,512 380,497 392,514 376,529",
  "381,491 395,480 401,507 389,516",
  "379,529 400,516 415,536 415,556 410,567 404,566",
];

const MapView = () => (
  <svg className="block h-full w-full" role="img" aria-label="Mappa" shapeRendering="crispEdges">
    <g transform="translate(-314.500 -125.500)" fill="#aa8439" stroke="#000">
      <path d="M576 145L587 160 607 193 632 235 661 279 684 323 691 343 704 375 712 396 719 422 712 444 666 473 627 494 560 532 539 543 527 549 512 563 502 569 496 569 447 490 417 438 382 374 363 343 340 303 369 285 394 264 397 265 419 250 540 167z" />
      <path d="M340 303L348 312 363 340 382 374M576 145L600 180 618 214M540 167L550 161 576 145" fill="none" />
      <path d="M369 285L394 264 423 304 397 320z" fill="none" />
      <path d="M493 423Q493 421 498 419L509 414Q519 413 523 410L529 402Q534 398 538 405Q541 410 541 421Q537 432 536 437Q536 446 533 450Q529 453 528 457Q524 462 516 459Q511 455 505 445L500 435z" fill="none" />
      <g transform="translate(525 135) scale(.3333)" fill="none">
        {stones.map((points) => (
          <polygon key={points} points={points} vectorEffect="non-scaling-stroke" />
        ))}
      </g>
      <path d="M917 249L1010 250 1011 344 917 343z" />
    </g>
    <g transform="translate(-314 -125)" stroke="#000" fill="none">
      <path d="M917 249V343" strokeWidth="2" />
      <path d="M917 248.500H941M987 250.500H1011M917 342.500H941M988 344.500H1012M1011.500 298V345" />
    </g>
    <g fill="#000">
      {gridX.map((x) => <rect key={x} x={x} width="1" height="100%" />)}
      {gridY.map((y) => <rect key={y} y={y} width="100%" height="1" />)}
    </g>
    <path transform="translate(-315 -126)" d="M918.500 244v11M913 249.500h11" stroke="#ff00ff" strokeWidth="3" />
  </svg>
);

/* ---------- page ---------- */

const TreeIcon = ({ up = false }: { up?: boolean }) => (
  <svg viewBox="0 0 16 16" className="h-4 w-4" aria-hidden="true">
    <rect x=".5" y="1.500" width="15" height="13" fill="#f4f7fd" stroke="#6c9af0" />
    <path d="M0 1h16v3H0z" fill="#2f68e0" />
    <path d="M3.500 6v7M3.500 7.500h3M3.500 11.500h3" stroke="#aaa" />
    <path d="M6 6h3v3H6zM7 10.500h3v3H7z" fill="#f59a1c" />
    <path d={up ? "M12 4l4 4h-2.500v6h-3V8H8z" : "M12 13l4-4h-2.500V4h-3v5H8z"} fill="#f00" />
  </svg>
);

export default function App() {
  return (
    <div className="flex h-screen flex-col overflow-hidden bg-[#efefef] font-['Open_Sans','Noto_Sans',sans-serif] text-[11px] text-black">
      <header className="flex h-[22px] shrink-0 items-start border-b-2 border-[#43302e] bg-[linear-gradient(100deg,#a99b96_0%,#b9aca8_5%,#8a736d_9%,#6b5048_14%,#7a5c52_24%,#5f433c_32%,#74524c_45%,#9c817b_58%,#70504b_66%,#6b4b47_72%,#805f5a_82%,#6f4f4c_87%,#9c827d_92%,#a58d88_100%)] pr-[3px]">
        <svg viewBox="0 0 16 16" className="mt-[3px] h-4 w-4 shrink-0" aria-hidden="true">
          <path d="M5 3C0 5 0 13 5 14.500c3 1 5 .5 6-1l3 1.500-1.500-3.500C14 7 11 3 5 3z" fill="#e9e94a" stroke="#a8b02c" />
          <path d="M6 6c-2 1-2 5 0 5.500 2 0 3-1.500 2.500-3z" fill="#fff" />
          <path d="M4 12L11 4 9 2l5-1-.5 5-1.500-1.500L6 12z" fill="#2f8a2f" stroke="#14541a" strokeWidth=".6" />
        </svg>
        <h1 className="flex-1 pl-[5px] text-[12px] leading-[21px] font-normal">QGIS 4291337</h1>
        <div className="flex h-[18px] overflow-hidden rounded-b-[5px] border border-t-0 border-[#3d2b2a]">
          <button type="button" aria-label="Riduci a icona" className="flex w-7 items-center justify-center border-r border-[#4c3a39] bg-[linear-gradient(#cbbcb9_0%,#ac9a97_45%,#705a57_50%,#937f7b_100%)]">
            <svg viewBox="0 0 14 12" className="h-3 w-3.5" aria-hidden="true"><path d="M1.500 6.500h11v3.500h-11z" fill="#fff" stroke="#44465a" /></svg>
          </button>
          <button type="button" aria-label="Ripristina" className="flex w-[27px] items-center justify-center border-r border-[#4c3a39] bg-[linear-gradient(#cbbcb9_0%,#ac9a97_45%,#705a57_50%,#937f7b_100%)]">
            <svg viewBox="0 0 14 12" className="h-3 w-3.5" aria-hidden="true"><path d="M4.500.5h8v8h-8z" fill="#fff" stroke="#44465a" /><path d="M1.500 2.500h9v9h-9z" fill="#fff" stroke="#44465a" /><path d="M4.500 5.500h3v3h-3z" fill="#8b7b78" stroke="#44465a" /></svg>
          </button>
          <button type="button" aria-label="Chiudi" className="flex w-[46px] items-center justify-center bg-[linear-gradient(#eba596_0%,#d96d55_45%,#b8280c_50%,#dc5a34_100%)]">
            <svg viewBox="0 0 14 12" className="h-3 w-3.5" aria-hidden="true"><path d="M2 1h3.500L7 3.200 8.500 1H12L9 5.800 12 11H8.500L7 8.400 5.500 11H2l3-5.200z" fill="#fff" stroke="#44465a" /></svg>
          </button>
        </div>
      </header>

      <nav aria-label="Menu" className="flex h-[23px] shrink-0 items-center gap-3 border-b border-[#b9b9b9] px-[9px] pt-0.5">
        {menus.map(([before, key, after]) => (
          <button type="button" key={before + key + after} className="whitespace-nowrap">
            {before}<u className="underline-offset-2">{key}</u>{after}
          </button>
        ))}
      </nav>

      <div className="flex h-[39px] shrink-0 items-center gap-[7px] border-t border-b border-t-white border-b-[#b9b9b9] pb-0.5 pl-1">
        <Group label="File" items={fileTools} />
        <Group label="Gestione layer" items={layerTools} />
        <Group label="Navigazione mappa" items={navTools} />
      </div>
      <div className="flex h-[39px] shrink-0 items-center border-t border-b border-t-white border-b-[#b9b9b9] pb-0.5 pl-1">
        <Group label="Attributi" items={attributeTools} />
      </div>

      <main className="flex min-h-0 flex-1">
        <section aria-label="Legenda" className="flex w-[306px] shrink-0 flex-col">
          <div className="flex h-[18px] shrink-0 items-center gap-2 pr-px pl-1">
            <DockGrip />
            <h2 className="text-[10px] font-normal">Legenda</h2>
            <DockGrip />
            <div className="-ml-1 flex gap-0.5">
              <button type="button" aria-label="Sgancia" className="flex h-3.5 w-3.5 items-center justify-center rounded-[3px] border border-[#777]">
                <svg viewBox="0 0 10 10" className="h-2.5 w-2.5" aria-hidden="true"><path d="M3.500 3V1.500h5v4H7M1.500 4.500h5v4h-5zM3 1.500h6M1 4.500h6" fill="none" stroke="#000" strokeWidth="1.300" /></svg>
              </button>
              <button type="button" aria-label="Chiudi pannello" className="flex h-3.5 w-3.5 items-center justify-center rounded-[3px] border border-[#777]">
                <svg viewBox="0 0 10 10" className="h-2.5 w-2.5" aria-hidden="true"><path d="M1.500 1.500l7 7M8.500 1.500l-7 7" stroke="#000" strokeWidth="1.500" /></svg>
              </button>
            </div>
          </div>
          <div className="flex h-8 shrink-0 items-center gap-4 pb-1 pl-[5px]">
            <button type="button" aria-label="Aggiungi gruppo">
              <svg viewBox="0 0 16 16" className="h-4 w-4" aria-hidden="true">
                <path d="M.5 6.500h8v9h-8zM2.500 4.500h8v9h-8zM5.500 2.500h8v9h-8z" fill="#f2f2f2" stroke="#888" />
                <path d="M7 9V3q0-2.500 1.500-2.500T10 3v6q-1.500 2-2 0V4" fill="none" stroke="#2f5f96" strokeWidth="1.200" />
              </svg>
            </button>
            <button type="button" aria-label="Gestisci visibilità">
              <svg viewBox="0 0 16 16" className="h-4 w-4 overflow-visible" aria-hidden="true">
                <path d="M1 6C4 1.500 11 1.500 15 7 11 11 4 10 1 6z" fill="#e8eef2" stroke="#aaa" />
                <circle cx="8" cy="6.300" r="3" fill="#6c93b4" /><circle cx="8" cy="6.300" r="1.300" fill="#234" />
                <path d="M13 13h5l-2.500 3z" />
              </svg>
            </button>
            <button type="button" aria-label="Espandi tutto"><TreeIcon /></button>
            <button type="button" aria-label="Comprimi tutto"><TreeIcon up /></button>
          </div>
          <div className="min-h-0 flex-1 rounded-t-[3px] border-2 border-[#bdbdbd] border-l-[#d5d5d5] bg-white">
            <div className="flex h-[17px] items-center bg-[#efefef] pt-px">
              <svg className="h-4 w-[23px]" aria-hidden="true"><path d="M10.500 1v7.500H21" fill="none" stroke="#999" strokeDasharray="1 1" /></svg>
              <label className="flex items-center">
                <span className="relative flex h-3 w-3">
                  <input type="checkbox" defaultChecked className="peer h-3 w-3 appearance-none rounded-[2px] border border-[#b0b0b0] bg-white" />
                  <svg viewBox="0 0 12 12" className="pointer-events-none absolute inset-0 hidden h-3 w-3 peer-checked:block" aria-hidden="true"><path d="M2.500 2.500l7 7M9.500 2.500l-7 7" stroke="#000" strokeWidth="3" /></svg>
                </span>
                <svg viewBox="0 0 24 24" className="ml-[7px] h-4 w-4" aria-hidden="true"><Pencil fill="#a86a58" edge="#7f6a66" /></svg>
                <span className="ml-1.5 text-[11px] font-bold underline">pyunitastratigrafiche</span>
              </label>
            </div>
          </div>
          <div role="tablist" className="flex h-5 shrink-0 items-start pl-px">
            <button type="button" role="tab" aria-selected="false" className="h-[17px] rounded-b-[3px] border border-t-0 border-[#a5a5a5] bg-[linear-gradient(#f4f4f4,#dedede)] px-2 leading-[17px]">Ordine dei layer</button>
            <button type="button" role="tab" aria-selected="true" className="h-5 rounded-b-[3px] border border-t-0 border-l-0 border-[#a5a5a5] bg-[#efefef] px-[9px] leading-5">Legenda</button>
          </div>
        </section>
        <div className="flex w-1.5 shrink-0 items-center justify-center overflow-hidden" aria-hidden="true">
          <svg className="h-[188px] w-0.5"><path d="M1 0v188" stroke="#c4c4c4" strokeWidth="2" strokeDasharray="2 2" /></svg>
        </div>
        <section aria-label="Vista mappa" className="min-w-0 flex-1 border-2 border-r border-t-[#2f7fd0] border-r-[#56a7ee] border-b-[#5aaaf0] border-l-[#4594e2] bg-white">
          <MapView />
        </section>
      </main>

      <footer className="h-[34px] shrink-0 overflow-hidden">
        <div className="flex items-center gap-[7px] pt-[3px] pl-[5px]">
          <Group label="Modifica" items={editTools} />
          <Group label="Modifica avanzata" items={advancedTools} />
        </div>
      </footer>
    </div>
  );
}
